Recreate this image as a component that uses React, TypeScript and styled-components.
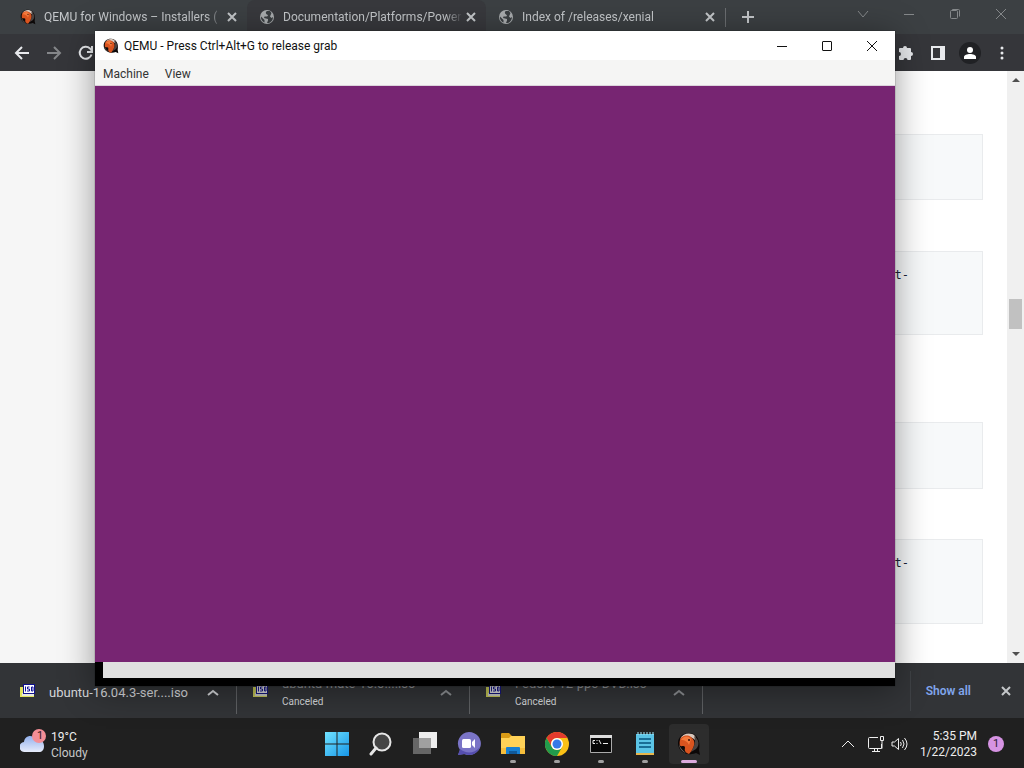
import React from "react";
import styled, { createGlobalStyle } from "styled-components";

const GlobalStyle = createGlobalStyle`
	* {
		box-sizing: border-box;
	}
	body {
		margin: 0;
		font-family: Roboto, "Open Sans", sans-serif;
		font-size: 12px;
	}
	button {
		padding: 0;
		border: none;
		background: none;
		color: inherit;
		font: inherit;
	}
	svg {
		display: block;
		flex: none;
	}
`;

const Desktop = styled.div`
	position: relative;
	display: flex;
	flex-direction: column;
	height: 100vh;
	overflow: hidden;
	background: #202020;
`;

const Browser = styled.div`
	display: flex;
	flex: 1;
	flex-direction: column;
	min-height: 0;
	color: #c4c7ca;
`;

const TabStrip = styled.div`
	display: flex;
	height: 34px;
	padding-left: 8px;
	background: #3c4043;
`;

const Tab = styled.div<{ $active?: boolean; $divider?: boolean }>`
	position: relative;
	display: flex;
	flex: 0 1 239px;
	align-items: center;
	gap: 8px;
	min-width: 0;
	padding: 0 7px 0 12px;
	border-radius: 8px 8px 0 0;
	background: ${({ $active }) => ($active ? "#38393d" : "transparent")};
	&::after {
		content: "";
		position: absolute;
		right: -1px;
		top: 8px;
		width: 1px;
		height: 19px;
		background: ${({ $divider }) => ($divider ? "#6b6e71" : "transparent")};
	}
`;

const TabTitle = styled.span`
	flex: 1;
	margin-right: -8px;
	overflow: hidden;
	white-space: nowrap;
	line-height: 18px;
	mask-image: linear-gradient(to right, #000 90%, transparent);
`;

const IconButton = styled.button<{ $width?: number }>`
	display: flex;
	align-items: center;
	justify-content: center;
	flex: none;
	width: ${({ $width }) => $width || 16}px;
	height: 24px;
`;

const NewTab = styled(IconButton)`
	height: 34px;
`;

const ForwardButton = styled(IconButton)`
	color: #85878a;
`;

const BrowserControls = styled.div`
	display: flex;
	margin-left: auto;
	padding-top: 2px;
	color: #85888a;
`;

const Toolbar = styled.div`
	display: flex;
	align-items: center;
	justify-content: space-between;
	height: 37px;
	padding: 0 6px;
	background: #35363a;
	color: #e8eaed;
`;

const ToolGroup = styled.div`
	display: flex;
`;

const Page = styled.div`
	display: flex;
	flex: 1;
	min-height: 0;
	background: #fff;
`;

const Sidebar = styled.aside`
	width: 20%;
	background: #f6f6f6;
`;

const Article = styled.main`
	display: flex;
	flex: 1;
	flex-direction: column;
	padding: 63px 24px 0;
`;

const CodeBlock = styled.pre<{ $height: number; $gap: number }>`
	flex: none;
	height: ${({ $height }) => $height}px;
	margin: 0 0 ${({ $gap }) => $gap}px;
	padding: 15px 73px 0 0;
	border: 1px solid #e9ebed;
	background: #f7f9fa;
	color: #1b2438;
	font-family: "DejaVu Sans Mono", monospace;
	font-size: 12px;
	line-height: 16px;
	text-align: right;
`;

const ScrollTrack = styled.div`
	display: flex;
	flex-direction: column;
	align-items: center;
	justify-content: space-between;
	width: 17px;
	padding: 7px 0;
	background: #f0f0f0;
`;

const ScrollArrow = styled.button<{ $down?: boolean }>`
	border: 4px solid transparent;
	border-top-width: ${({ $down }) => ($down ? 4 : 0)}px;
	border-bottom-width: ${({ $down }) => ($down ? 0 : 4)}px;
	border-top-color: ${({ $down }) => ($down ? "#505050" : "transparent")};
	border-bottom-color: ${({ $down }) => ($down ? "transparent" : "#505050")};
`;

const ScrollThumb = styled.div`
	width: 13px;
	height: 30px;
	margin-bottom: 106px;
	background: #c1c1c1;
`;

const DownloadBar = styled.div`
	display: flex;
	align-items: center;
	height: 55px;
	padding: 0 10px 0 4px;
	background: #323437;
`;

const DownloadItem = styled.div<{ $canceled?: boolean }>`
	display: flex;
	align-items: center;
	flex: 0 1 233px;
	gap: 14px;
	min-width: 0;
	height: 46px;
	padding: 4px 15px 0 16px;
	border-right: 1px solid #5f6164;
	color: ${({ $canceled }) => ($canceled ? "#8d9093" : "#d5d7da")};
	font-size: 13px;
	line-height: 18px;
	& > svg {
		margin-bottom: 4px;
		opacity: ${({ $canceled }) => ($canceled ? 0.8 : 1)};
	}
`;

const DownloadText = styled.div`
	flex: 1;
	min-width: 0;
	white-space: nowrap;
`;

const DownloadStatus = styled.div`
	color: #d5d7da;
	font-size: 10px;
`;

const DownloadEnd = styled.div`
	display: flex;
	align-items: center;
	gap: 27px;
	height: 40px;
	margin-left: auto;
	padding-left: 15px;
	border-left: 1px solid #3f4246;
`;

const ShowAll = styled.button`
	color: #80a5ec;
	font-weight: 600;
`;

const EmulatorWindow = styled.section`
	position: absolute;
	top: 31px;
	right: 129px;
	bottom: 82px;
	left: 95px;
	display: flex;
	flex-direction: column;
	background: #000;
	color: #111;
	box-shadow: 0 4px 32px rgba(0, 0, 0, 0.4), 0 0 1px rgba(0, 0, 0, 0.6);
`;

const TitleBar = styled.header`
	display: flex;
	align-items: center;
	height: 29px;
	padding-left: 8px;
	background: #fff;
`;

const WindowTitle = styled.h1`
	flex: 1;
	margin: 0;
	padding-left: 5px;
	font-size: 12px;
	font-weight: 400;
`;

const MenuBar = styled.nav`
	display: flex;
	align-items: center;
	gap: 16px;
	height: 26px;
	padding: 2px 8px 0;
	border-bottom: 1px solid #dcd4dc;
	background: #f5f5f4;
	color: #333;
`;

const Screen = styled.div`
	flex: 1;
	background: #772572;
`;

const ScreenFooter = styled.div`
	height: 24px;
	padding: 0 0 8px 8px;
	background: #e0e0e0 content-box;
`;

const TaskBar = styled.footer`
	display: grid;
	grid-template-columns: 1fr auto 1fr;
	align-items: center;
	height: 50px;
	padding: 2px 20px 0;
	background: #202020;
	color: #eee;
	line-height: 16px;
`;

const Weather = styled.button`
	display: flex;
	gap: 4px;
	padding-top: 2px;
	text-align: left;
`;

const Muted = styled.div`
	color: #c8c8c8;
`;

const Apps = styled.div`
	display: flex;
	gap: 4px;
	padding-left: 1px;
`;

const AppButton = styled.button<{ $running?: boolean; $active?: boolean }>`
	position: relative;
	display: flex;
	align-items: center;
	justify-content: center;
	width: 40px;
	height: 40px;
	border-radius: 4px;
	background: ${({ $active }) => ($active ? "#2d2d2d" : "transparent")};
	&::after {
		content: "";
		position: absolute;
		bottom: 1px;
		width: ${({ $active }) => ($active ? 16 : 6)}px;
		height: 3px;
		border-radius: 2px;
		background: ${({ $active, $running }) =>
			$active ? "#dcaadd" : $running ? "#a0a0a0" : "transparent"};
	}
`;

const Tray = styled.div`
	display: flex;
	align-items: center;
	justify-content: flex-end;
`;

const Clock = styled.time`
	padding: 0 11px 0 12px;
	text-align: right;
`;

const Badge = styled.span`
	width: 16px;
	height: 16px;
	border-radius: 50%;
	background: #d693e3;
	color: #2b1a30;
	font-size: 11px;
	text-align: center;
`;

const Line = ({ d, size = 16, stroke = 1 }: { d: string; size?: number; stroke?: number }) => (
	<svg width={size} height={size} viewBox="0 0 16 16" fill="none" stroke="currentColor" strokeWidth={stroke}>
		<path d={d} />
	</svg>
);

const QemuIcon = ({ size = 16 }: { size?: number }) => (
	<svg width={size} height={size} viewBox="0 0 24 24">
		<path d="M12 1C6 1 1 5 1 11c0 6 4 10 10 11 3 .5 6 0 8-1l4 2-1-5c2-9-2-17-10-17z" fill="#0c0808" />
		<path d="M3 7C6 1 14 0 18 4c1 2 1 3 0 4-4-4-11-4-15-1z" fill="#d9c8bd" />
		<path d="M17 4c5 3 6 9 2 13l-5 3c3-5 5-10 3-16z" fill="#4a4341" />
		<path d="M3 8c1-4 7-6 11-3 4 3 4 7 2 11-1 2-2 4-4 6-3-1-5-3-4-6 0-2-1-2-3-2-2 1-3-2-2-6z" fill="#d9541f" />
		<path d="M4 8c2-4 7-5 10-1l-2 6c-1-3-4-5-8-5z" fill="#f47a3c" />
		<circle cx="12" cy="8" r="1" fill="#301008" />
		<path d="M2 12c1 4 4 7 7 9-4-1-7-5-7-9z" fill="#70665f" />
	</svg>
);

const GlobeIcon = () => (
	<svg width="16" height="16" viewBox="0 0 16 16">
		<circle cx="8" cy="8" r="7" fill="#a9acae" />
		<path d="M8 2c-2 1-1 3 0 3.500 1.500.5 1 2-.5 2H5.500L5 9l4 1v1.500L8 14c4 .5 6-3 6-6l-1.500 1L11 7.500 12.500 4 11 2zM2 7.500L5.500 11v2.500C3 12.500 1.500 10 2 7.500z" fill="#3b3f42" />
	</svg>
);

const IsoIcon = () => (
	<svg width="15" height="15" viewBox="0 0 15 15">
		<path d="M0 4h3v7h11v3H0z" fill="#e2e45c" />
		<path d="M2 10h12v3H2z" fill="#e8e8e0" />
		<path d="M3 1h12v10H3z" fill="#10108c" />
		<path d="M4 2h10v8H4z" fill="#fff" />
		<path d="M5.500 3.500v5M9.500 4H7.500v2h2v2H7M11.500 4h1.500v4h-1.500z" fill="none" stroke="#15159a" />
	</svg>
);

const WeatherIcon = () => (
	<svg width="27" height="30" viewBox="0 0 27 30">
		<defs>
			<linearGradient id="cloud" x2="0" y2="1">
				<stop stopColor="#93b1ed" />
				<stop offset="1" stopColor="#e7ecfb" />
			</linearGradient>
		</defs>
		<path d="M5 23a5 5 0 0 1-1-10C5 6 13 5 16 11c5-1 8 2 8 6 0 4-2 6-5 6z" fill="url(#cloud)" />
		<circle cx="19" cy="7" r="7" fill="#f48e96" />
		<text x="20" y="10" textAnchor="middle" fontSize="11" fill="#321719">1</text>
	</svg>
);

const WindowsIcon = () => (
	<svg width="24" height="24" viewBox="0 0 24 24">
		<defs>
			<linearGradient id="win" x2="1" y2="1">
				<stop stopColor="#71e3ff" />
				<stop offset="1" stopColor="#1796e8" />
			</linearGradient>
		</defs>
		<path d="M0 0h11.500v11.500H0zM12.500 0H24v11.500H12.500zM0 12.500h11.500V24H0zM12.500 12.500H24V24H12.500z" fill="url(#win)" />
	</svg>
);

const SearchIcon = () => (
	<svg width="24" height="24" viewBox="0 0 24 24" fill="none" stroke="#e6e6e6">
		<circle cx="13" cy="10" r="8.500" strokeWidth="2" fill="#444" />
		<path d="M7 16l-5 6" strokeWidth="3" strokeLinecap="round" />
	</svg>
);

const TaskViewIcon = () => (
	<svg width="24" height="24" viewBox="0 0 24 24">
		<path d="M6 0h18v16H6z" fill="#eee" />
		<path d="M0 6h18v16H0z" fill="#666" />
		<path d="M6 6h12v10H6z" fill="#a0a0a0" />
	</svg>
);

const ChatIcon = () => (
	<svg width="24" height="24" viewBox="0 0 24 24">
		<path d="M12 0a12 11.500 0 1 1-5 22L1 23l2-5A11.500 11.500 0 0 1 12 0z" fill="#7a74c6" />
		<path d="M3 17c6 5 14 5 20-2-2 6-9 10-15 7l-7 1z" fill="#554eae" />
		<rect x="5" y="7" width="9" height="9" rx="1.500" fill="#fff" />
		<path d="M15 10l3-3v9l-3-3z" fill="#fff" />
	</svg>
);

const FolderIcon = () => (
	<svg width="26" height="24" viewBox="0 0 26 24">
		<path d="M1 2c0-1 1-1 1-1h7l3 3h12v6H1z" fill="#d99b16" />
		<path d="M1 6h8l2-2h14v17H1z" fill="#ffd257" />
		<path d="M1 16h24v6H1z" fill="#f6be3b" />
		<path d="M6 16q0-1 1-1h12q1 0 1 1v6H6z" fill="#1780d2" />
		<path d="M9 19h8v3H9z" fill="#10599a" />
	</svg>
);

const ChromeIcon = () => (
	<svg width="24" height="24" viewBox="0 0 24 24">
		<circle cx="12" cy="12" r="12" fill="#fbc116" />
		<path d="M1.600 6A12 12 0 0 1 22.400 6H12a6 6 0 0 0-5.200 9z" fill="#e33b2e" />
		<path d="M1.600 6A12 12 0 0 0 12 24l5.200-9A6 6 0 0 1 6.800 15z" fill="#229b4c" />
		<circle cx="12" cy="12" r="6" fill="#fff" />
		<circle cx="12" cy="12" r="4.500" fill="#3579e6" />
	</svg>
);

const TerminalIcon = () => (
	<svg width="24" height="24" viewBox="0 0 24 24">
		<path d="M1.500 3.500h21v17h-21z" fill="#080808" stroke="#aaa" />
		<path d="M1 3h22v3H1z" fill="#ddd" />
		<path d="M6 8.500H4v3h2M8 8v1M8 11v1M10 8l2 4M14 11.500h5" fill="none" stroke="#eee" />
	</svg>
);

const NotepadIcon = () => (
	<svg width="20" height="24" viewBox="0 0 20 24">
		<path d="M1 2h18v19H1z" fill="#5bc4e6" />
		<path d="M1 21h18v2H1z" fill="#e8b64c" />
		<path d="M3 0v3M6 0v3M9 0v3M12 0v3M15 0v3M18 0v3" stroke="#a8e8fa" />
		<path d="M4 7h12M4 11h12M4 15h12" stroke="#1a6e96" strokeWidth="2" />
	</svg>
);

const close = "M3 3l10 10M13 3L3 13";

const tabs = [
	{ title: "QEMU for Windows – Installers (", icon: <QemuIcon /> },
	{ title: "Documentation/Platforms/Power", icon: <GlobeIcon />, active: true },
	{ title: "Index of /releases/xenial", icon: <GlobeIcon />, divider: true },
];

const blocks = [
	{ height: 66, gap: 51, text: "" },
	{ height: 84, gap: 87, text: "t-" },
	{ height: 67, gap: 50, text: "" },
	{ height: 85, gap: 0, text: "t-" },
];

const downloads = [
	{ name: "ubuntu-16.04.3-ser....iso" },
	{ name: "ubuntu-mate-16.0....iso", canceled: true },
	{ name: "Fedora-12-ppc-DVD.iso", canceled: true },
];

const apps = [
	{ name: "Start", icon: <WindowsIcon /> },
	{ name: "Search", icon: <SearchIcon /> },
	{ name: "Task View", icon: <TaskViewIcon /> },
	{ name: "Chat", icon: <ChatIcon /> },
	{ name: "File Explorer", icon: <FolderIcon />, running: true },
	{ name: "Chrome", icon: <ChromeIcon />, running: true },
	{ name: "Command Prompt", icon: <TerminalIcon />, running: true },
	{ name: "Notepad", icon: <NotepadIcon />, running: true },
	{ name: "QEMU", icon: <QemuIcon size={24} />, running: true, active: true },
];

const App = () => {
	return (
		<Desktop>
			<GlobalStyle />
			<Browser>
				<TabStrip>
					{tabs.map((tab) => (
						<Tab key={tab.title} $active={tab.active} $divider={tab.divider}>
							{tab.icon}
							<TabTitle>{tab.title}</TabTitle>
							<IconButton aria-label="Close tab">
								<Line d="M4 4l8 8M12 4l-8 8" stroke={2} />
							</IconButton>
						</Tab>
					))}
					<NewTab $width={46} aria-label="New tab">
						<Line d="M8 2v12M2 8h12" stroke={2} />
					</NewTab>
					<BrowserControls>
						<IconButton $width={46} aria-label="Search tabs"><Line d="M3 5l5 6 5-6" /></IconButton>
						<IconButton $width={46} aria-label="Minimize"><Line d="M3 8.500h10" /></IconButton>
						<IconButton $width={46} aria-label="Restore">
							<Line d="M3.500 5.500q0-1 1-1h5q1 0 1 1v6q0 1-1 1h-5q-1 0-1-1zM5.500 4.500v-1h6q1 0 1 1v6" />
						</IconButton>
						<IconButton $width={46} aria-label="Close"><Line d={close} /></IconButton>
					</BrowserControls>
				</TabStrip>
				<Toolbar>
					<ToolGroup>
						<IconButton $width={32} aria-label="Back"><Line d="M15 8H2M8 2L2 8l6 6" stroke={2} /></IconButton>
						<ForwardButton $width={32} aria-label="Forward">
							<Line d="M1 8h13M8 2l6 6-6 6" stroke={2} />
						</ForwardButton>
						<IconButton $width={32} aria-label="Reload">
							<Line d="M13.500 9.500A6 6 0 1 1 12 3.500L14 6M14 1v6H9" stroke={2} />
						</IconButton>
					</ToolGroup>
					<ToolGroup>
						<IconButton $width={32} aria-label="Extensions">
							<svg width="16" height="16" viewBox="0 0 16 16" fill="currentColor">
								<path d="M5 3a2 2 0 0 1 4 0h3q1 0 1 1v3a2 2 0 0 1 0 4v3q0 1-1 1H9.500a2 2 0 0 0-4 0H2q-1 0-1-1v-3a2 2 0 0 0 0-4V4q0-1 1-1z" />
							</svg>
						</IconButton>
						<IconButton $width={32} aria-label="Side panel">
							<svg width="16" height="16" viewBox="0 0 16 16">
								<path d="M2 2h12v12H2z" fill="none" stroke="currentColor" strokeWidth="2" />
								<path d="M10 2h4v12h-4z" fill="currentColor" />
							</svg>
						</IconButton>
						<IconButton $width={32} aria-label="Profile">
							<svg width="22" height="22" viewBox="0 0 22 22">
								<circle cx="11" cy="11" r="11" fill="#202124" />
								<circle cx="11" cy="8" r="3" fill="#fff" />
								<path d="M5 17v-2c0-4 12-4 12 0v2z" fill="#fff" />
							</svg>
						</IconButton>
						<IconButton $width={32} aria-label="Menu">
							<svg width="4" height="16" viewBox="0 0 4 16" fill="currentColor">
								<circle cx="2" cy="3" r="1.500" />
								<circle cx="2" cy="8" r="1.500" />
								<circle cx="2" cy="13" r="1.500" />
							</svg>
						</IconButton>
					</ToolGroup>
				</Toolbar>
				<Page>
					<Sidebar />
					<Article>
						{blocks.map((block, i) => (
							<CodeBlock key={i} $height={block.height} $gap={block.gap}>{block.text}</CodeBlock>
						))}
					</Article>
					<ScrollTrack>
						<ScrollArrow aria-label="Scroll up" />
						<ScrollThumb />
						<ScrollArrow $down aria-label="Scroll down" />
					</ScrollTrack>
				</Page>
				<DownloadBar>
					{downloads.map((item) => (
						<DownloadItem key={item.name} $canceled={item.canceled}>
							<IsoIcon />
							<DownloadText>
								{item.name}
								{item.canceled && <DownloadStatus>Canceled</DownloadStatus>}
							</DownloadText>
							<IconButton aria-label="Download options"><Line d="M3 10l5-4 5 4" stroke={2} /></IconButton>
						</DownloadItem>
					))}
					<DownloadEnd>
						<ShowAll>Show all</ShowAll>
						<IconButton aria-label="Close downloads"><Line d="M4 4l8 8M12 4l-8 8" stroke={2} /></IconButton>
					</DownloadEnd>
				</DownloadBar>
			</Browser>
			<TaskBar>
				<Weather>
					<WeatherIcon />
					<div>
						<div>19°C</div>
						<Muted>Cloudy</Muted>
					</div>
				</Weather>
				<Apps>
					{apps.map((app) => (
						<AppButton key={app.name} aria-label={app.name} $running={app.running} $active={app.active}>
							{app.icon}
						</AppButton>
					))}
				</Apps>
				<Tray>
					<IconButton $width={24} aria-label="Hidden icons"><Line d="M2 11l6-6 6 6" /></IconButton>
					<IconButton $width={32} aria-label="Network">
						<svg width="18" height="18" viewBox="0 0 18 18" fill="none" stroke="currentColor">
							<path d="M11 2.500H2.500q-1 0-1 1v9q0 1 1 1h12V9M5 16.500h8M7.500 13.500v3M10.500 13.500v3M13.500 1.500h3v4h-3zM15 5.500v8" />
						</svg>
					</IconButton>
					<IconButton aria-label="Volume">
						<svg width="17" height="16" viewBox="0 0 17 16" fill="none" stroke="currentColor">
							<path d="M1 6h2.500L7.500 2.500v11L3.500 10H1zM9.500 6q1.500 2 0 4M11.500 4q3 4 0 8M13.500 2q5 6 0 12" />
						</svg>
					</IconButton>
					<Clock>
						<div>5:35 PM</div>
						<div>1/22/2023</div>
					</Clock>
					<Badge>1</Badge>
				</Tray>
			</TaskBar>
			<EmulatorWindow>
				<TitleBar>
					<QemuIcon />
					<WindowTitle>QEMU - Press Ctrl+Alt+G to release grab</WindowTitle>
					<IconButton $width={45} aria-label="Minimize"><Line d="M3 8.500h10" /></IconButton>
					<IconButton $width={45} aria-label="Maximize">
						<Line d="M3.500 4q0-.5.500-.5h8q.5 0 .5.500v8q0 .5-.5.500h-8q-.5 0-.5-.5z" />
					</IconButton>
					<IconButton $width={46} aria-label="Close"><Line d={close} /></IconButton>
				</TitleBar>
				<MenuBar>
					<button>Machine</button>
					<button>View</button>
				</MenuBar>
				<Screen />
				<ScreenFooter />
			</EmulatorWindow>
		</Desktop>
	);
};

export default App;
